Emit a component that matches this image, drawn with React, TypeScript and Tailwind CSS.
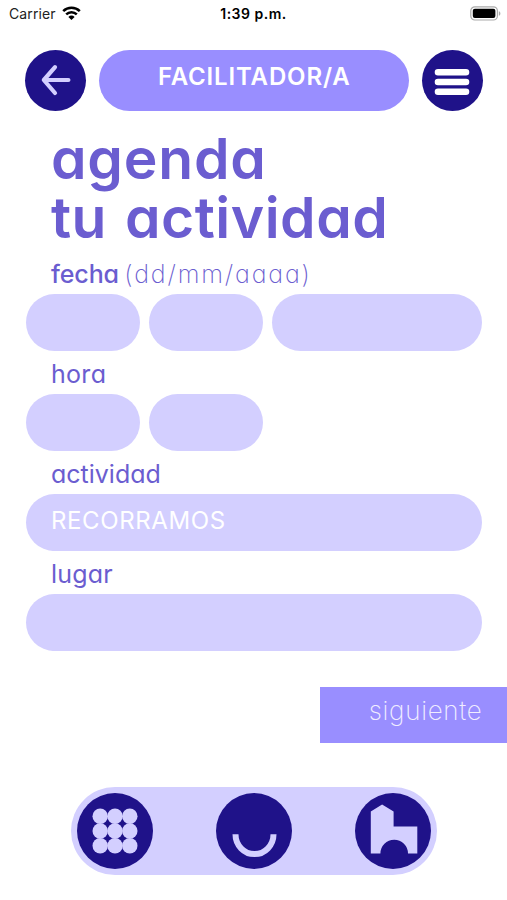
import React from 'react';

interface FieldProps {
  name: string;
  className?: string;
  defaultValue?: string;
}

const Field: React.FC<FieldProps> = ({ name, className = 'w-full', defaultValue = '' }) => (
  <input
    name={name}
    aria-label={name}
    defaultValue={defaultValue}
    className={`block h-[56.5px] rounded-full bg-[#d3cfff] pl-[25px] pr-6 pb-[3px] text-[24px] tracking-[0.6px] text-white outline-none ${className}`}
  />
);

const Label: React.FC<{ children: React.ReactNode }> = ({ children }) => (
  <div className="h-[43.5px] whitespace-nowrap pl-[25px] pt-[3.5px] text-[25px] leading-[40px] text-[#6b5dd0]">
    {children}
  </div>
);

const StatusBar = () => (
  <div className="flex h-[27px] items-center justify-between pl-[9px] pr-[6px] text-[14px] text-black [font-feature-settings:normal]">
    <div className="flex w-[120px] items-center gap-[6px]">
      <span className="tracking-[0.1px] text-[#222]">Carrier</span>
      <svg width="19" height="15" viewBox="0 0 19 15" fill="none" stroke="#000" strokeWidth="2.5">
        <path d="M1.2 5.2a11.8 11.8 0 0 1 16.6 0" />
        <path d="M4.2 8.4a7.5 7.5 0 0 1 10.6 0" />
        <path d="M9.5 14 6.4 10.9a4.4 4.4 0 0 1 6.2 0z" fill="#000" stroke="none" />
      </svg>
    </div>
    <span className="mr-[3px] font-semibold tracking-[0.5px]">1:39 p.m.</span>
    <div className="flex w-[120px] justify-end">
      <svg width="31" height="15" viewBox="0 0 31 15">
        <rect x="0.8" y="0.8" width="26.6" height="13.2" rx="4" fill="#fff" stroke="#aaa" strokeWidth="1.2" />
        <rect x="2.8" y="2.8" width="22.6" height="9.2" rx="2" fill="#000" />
        <path d="M28.8 5.2v4.6c1-.4 1.6-1.2 1.6-2.3s-.6-1.9-1.6-2.3z" fill="#aaa" />
      </svg>
    </div>
  </div>
);

export default function App() {
  return (
    <div className="flex h-[900px] w-[507px] flex-col overflow-hidden bg-white font-['Inter',sans-serif] [font-feature-settings:'cv11']">
      <StatusBar />

      <header className="mt-[22.5px] flex h-[61px] justify-between pl-[25px] pr-[24.5px]">
        <button aria-label="Volver" className="size-[61px] rounded-full bg-[#1f1289]">
          <svg viewBox="0 0 61 61" fill="none" stroke="#d3cfff" strokeWidth="4.2" strokeLinecap="round" strokeLinejoin="round">
            <path d="M30 17.2 18.8 30 30 43M19.2 30h24.2" />
          </svg>
        </button>
        <div className="flex w-[310px] items-center justify-center rounded-full bg-[#998eff] pb-[7px] pl-[1px] text-[24px] font-semibold tracking-[0.85px] text-white">
          FACILITADOR/A
        </div>
        <button aria-label="Menú" className="size-[61px] rounded-full bg-[#1f1289]">
          <svg viewBox="0 0 61 61" fill="none" stroke="#fff" strokeWidth="6.6" strokeLinecap="round">
            <path d="M16 22.3h28M16 32h28M16 41.7h28" />
          </svg>
        </button>
      </header>

      <main className="px-[26px] pr-[25px] pt-[18.5px]">
        <h1 className="whitespace-nowrap pl-[25px] text-[57px] font-semibold leading-[59px] text-[#6b5dd0]">
          <span className="block tracking-[0.8px]">agenda</span>
          <span className="block tracking-[0.5px] [word-spacing:3px]">tu actividad</span>
        </h1>

        <form className="pt-[3.5px]">
          <Label>
            <span className="tracking-[-0.1px] font-[450]">fecha</span>
            <span className="font-extralight tracking-[1.85px] [word-spacing:-3.5px]"> (dd/mm/aaaa)</span>
          </Label>
          <div className="flex gap-[9px]">
            <Field name="dia" className="w-[114px]" />
            <Field name="mes" className="w-[114px]" />
            <Field name="año" className="w-[210px]" />
          </div>

          <Label>
            <span className="tracking-[0.3px]">hora</span>
          </Label>
          <div className="flex gap-[9px]">
            <Field name="hora" className="w-[114px]" />
            <Field name="minutos" className="w-[114px]" />
          </div>

          <Label>actividad</Label>
          <Field name="actividad" defaultValue="RECORRAMOS" />

          <Label>
            <span className="tracking-[0.2px]">lugar</span>
          </Label>
          <Field name="lugar" />
        </form>
      </main>

      <button className="mt-[36.5px] flex h-[55.5px] w-[187.5px] shrink-0 items-center justify-end self-end bg-[#998eff] pb-[8px] pr-[24.5px] text-[26px] font-extralight tracking-[0.7px] text-[#f0edff]">
        siguiente
      </button>

      <nav className="ml-[71px] mt-[44.5px] flex h-[88px] w-[366px] shrink-0 items-center justify-between rounded-full bg-[#d3cfff] pl-[5.5px] pr-[6px]">
        <button aria-label="Actividades" className="size-[76px] rounded-full bg-[#1f1289]">
          <svg viewBox="0 0 76 76" fill="#d3cfff">
            {[23.2, 38, 52.8].map((y) =>
              [23.2, 38, 52.8].map((x) => <circle key={`${x}-${y}`} cx={x} cy={y} r="7.7" />)
            )}
          </svg>
        </button>
        <button aria-label="Inicio" className="size-[76px] rounded-full bg-[#1f1289]">
          <svg viewBox="0 0 76 76" fill="none" stroke="#d3cfff" strokeWidth="6">
            <path d="M19.5 41.3a19 19.8 0 0 0 38 0" />
          </svg>
        </button>
        <button aria-label="Lugares" className="size-[76px] rounded-full bg-[#1f1289]">
          <svg viewBox="0 0 76 76" fill="#d3cfff">
            <path d="M15.8 18.5 27.1 11.6 38.6 18.5V33.5H62.3V60.5H53a13.8 13.8 0 0 0-27.6 0H15.8z" />
          </svg>
        </button>
      </nav>
    </div>
  );
}
